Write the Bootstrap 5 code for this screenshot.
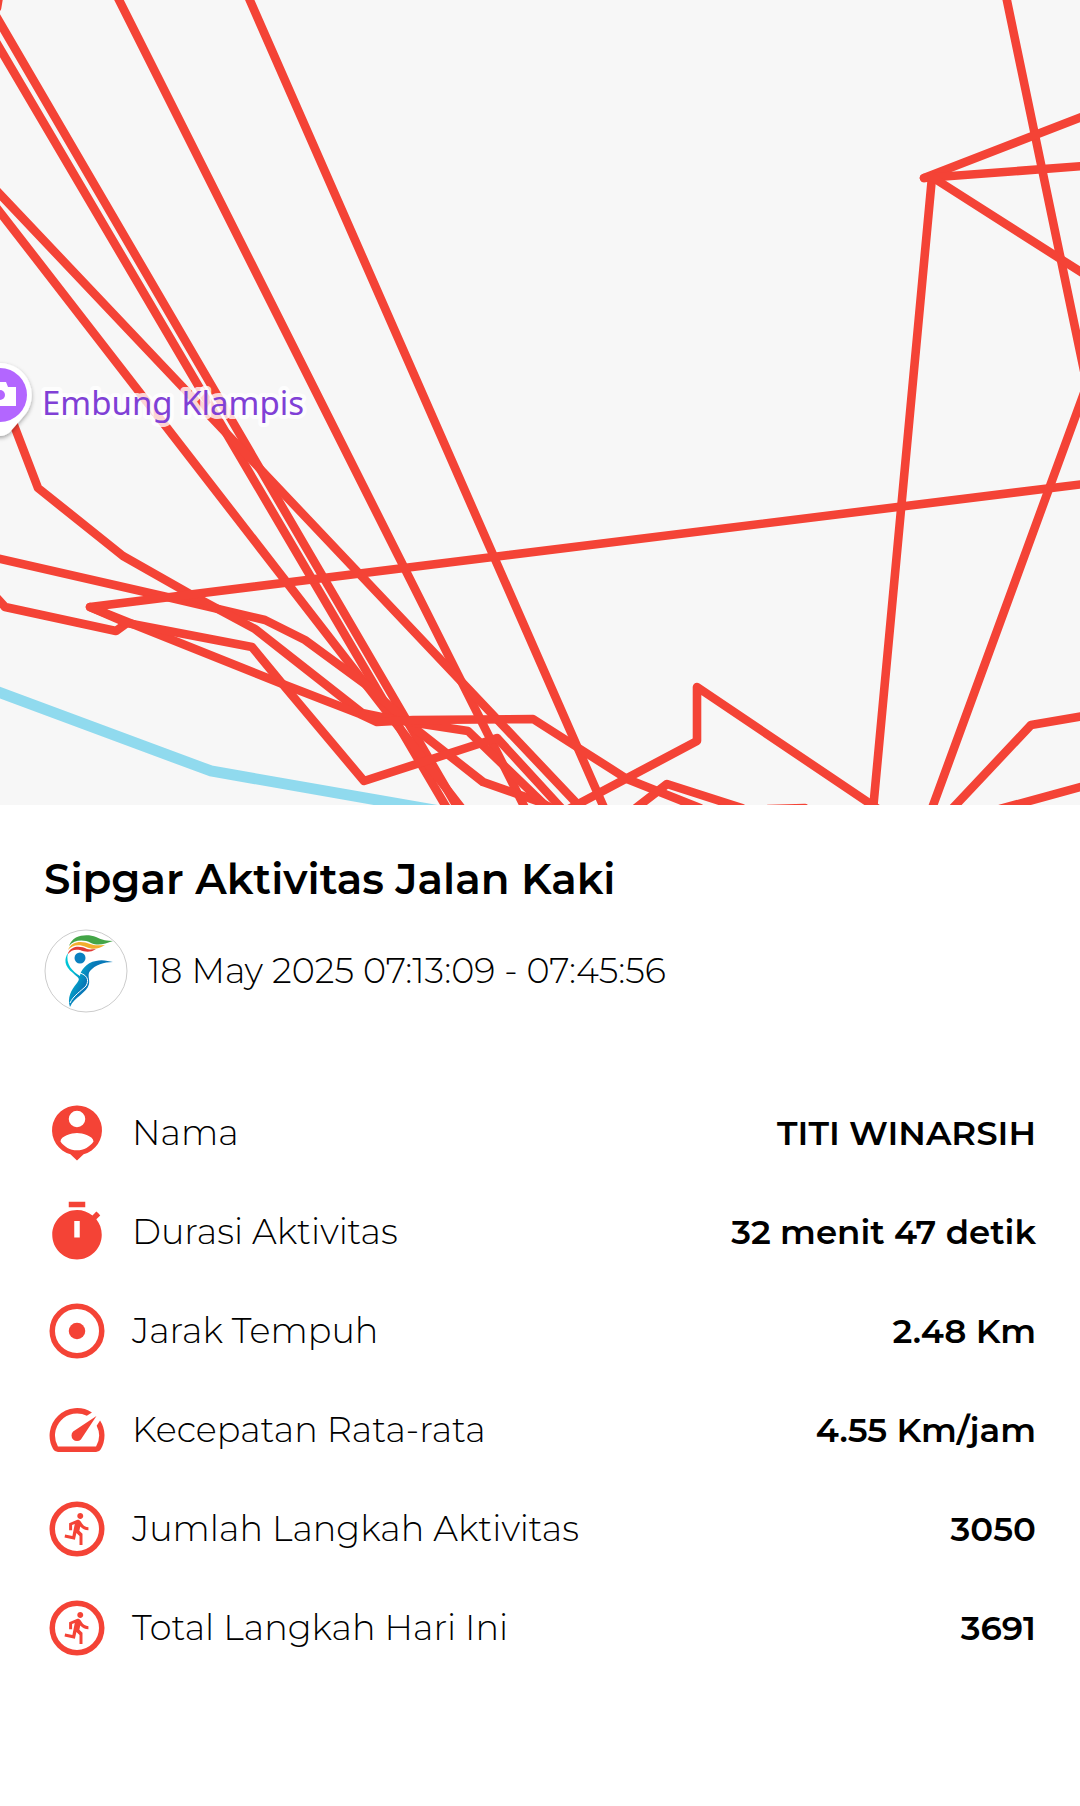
<!DOCTYPE html>
<html lang="id">
<head>
<meta charset="utf-8">
<meta name="viewport" content="width=device-width, initial-scale=1">
<title>Sipgar Aktivitas Jalan Kaki</title>
<link href="https://cdn.jsdelivr.net/npm/bootstrap@5.3.0/dist/css/bootstrap.min.css" rel="stylesheet">
<style>
  body { font-family: Montserrat, Inter, "Liberation Sans", sans-serif; color: #000; }
  .route-map { background: #f7f7f7; }
  .route-map svg { width: 100%; height: auto; }
  .place-name { font: 400 33px "Noto Sans", sans-serif; fill: #8040d6; stroke: #fff; stroke-opacity: .8; stroke-width: 8px; stroke-linejoin: round; paint-order: stroke; }
  .activity { padding: 48px 44px; }
  .activity-title { font-size: 42px; line-height: 52px; font-weight: 600; }
  .activity-time { font-size: 35px; line-height: 40px; font-weight: 300; }
  .activity-when { gap: 20px; }
  .avatar { width: 84px; height: 84px; }
  .stats { margin-top: 87px; gap: 33px; }
  .stat { min-height: 66px; gap: 22px; line-height: 40px; }
  .stat dt { font-size: 35px; font-weight: 300; }
  .stat dd { font-size: 34px; font-weight: 600; }
  .stat-icon { width: 66px; height: 66px; fill: #f44336; }
</style>
<script src="https://cdn.jsdelivr.net/npm/bootstrap@5.3.0/dist/js/bootstrap.bundle.min.js"></script>
</head>
<body class="bg-white">

<svg class="d-none" aria-hidden="true">
  <symbol id="icon-run" viewBox="0 0 24 24">
    <circle cx="12" cy="12" r="9" fill="none" stroke="#f44336" stroke-width="2"/>
    <path transform="translate(5.9 5.4) scale(.54)" d="M13.49 5.48c1.1 0 2-.9 2-2s-.9-2-2-2-2 .9-2 2 .9 2 2 2zm-3.6 13.9l1-4.4 2.1 2v6h2v-7.5l-2.1-2 .6-3c1.3 1.5 3.3 2.5 5.5 2.5v-2c-1.9 0-3.5-1-4.3-2.4l-1-1.6c-.4-.6-1-1-1.7-1-.3 0-.5.1-.8.1l-5.2 2.2v4.7h2v-3.4l1.8-.7-1.6 8.1-4.9-1-.4 2 7 1.4z"/>
  </symbol>
</svg>

<main>
  <section class="route-map" aria-label="Peta rute">
    <svg class="d-block" viewBox="0 0 1080 805" role="img" aria-label="Rute aktivitas di sekitar Embung Klampis">
      <defs>
        <filter id="pin-shadow" x="-30%" y="-30%" width="160%" height="160%"><feDropShadow dx="0" dy="2" stdDeviation="2" flood-opacity=".35"/></filter>
      </defs>
      <!-- river -->
      <path d="M-10 689L211 771L440 811" fill="none" stroke="#90daee" stroke-width="11"/>
      <!-- walking track -->
      <g fill="none" stroke="#f44336" stroke-width="8.6" stroke-linejoin="round" stroke-linecap="round">
        <path d="M248 -4L605 810"/>
        <path d="M117 -4L526 810"/>
        <path d="M-4 16L459 810"/>
        <path d="M-4 42L448 810"/>
        <path d="M-3 8L-1 -4"/>
        <path d="M-4 190L583 810"/>
        <path d="M-4 207L463 810"/>
        <path d="M-4 558L167 597L265 620L305 640L365 684L413 727L483 782L540 802L555 810"/>
        <path d="M12 420L38 488L123 556L190 594L255 629L362 713L396 720L468 731L550 810"/>
        <path d="M1084 484L493 557L90 607L280 683L360 714L377 722L413 720L533 719L580 749L627 779L700 808"/>
        <path d="M-4 597L5 607L116 631L127 623L252 647L280 681L364 781L497 738L563 810"/>
        <path d="M127 623L90 607"/>
        <path d="M567 810L697 741L697 687L878 809"/>
        <path d="M636 808L667 784L742 808"/>
        <path d="M768 809L805 808"/>
        <path d="M1006 -4L1087 385L931 811"/>
        <path d="M873 810L932 177L924 178L1084 116"/>
        <path d="M924 178L1084 166"/>
        <path d="M932 177L1084 274"/>
        <path d="M951 810L1031 725L1084 716"/>
        <path d="M1000 809L1084 786"/>
      </g>
      <!-- place marker -->
      <g>
        <path d="M0 363A32 32 0 0 1 23 417L10 432Q0 440 -10 432L-23 417A32 32 0 0 1 0 363Z" fill="#fff" filter="url(#pin-shadow)"/>
        <circle cx="0" cy="395" r="27" fill="#b366ff"/>
        <path d="M-16 387H-9L-7 382H6L8 387H16V406H-16Z" fill="#fff"/>
        <circle cx="0" cy="395" r="5" fill="#b366ff"/>
        <text class="place-name" x="42" y="415">Embung Klampis</text>
      </g>
    </svg>
  </section>

  <section class="activity">
    <h1 class="activity-title mb-4">Sipgar Aktivitas Jalan Kaki</h1>
    <div class="activity-when d-flex align-items-center">
      <svg class="avatar flex-shrink-0" viewBox="0 0 84 84" role="img" aria-label="Sipgar">
        <defs><linearGradient id="body-fill" gradientUnits="userSpaceOnUse" x1="25" y1="46" x2="41" y2="54"><stop offset="0" stop-color="#00c4d6"/><stop offset="1" stop-color="#0879b8"/></linearGradient></defs>
        <circle cx="42" cy="42" r="41" fill="#fff" stroke="#ccc" stroke-width="1"/>
        <path d="M25 17C29 5 44 5 52 8C58 11 64 12 69 12C61 15 54 17 47 14C39 10 30 11 25 17Z" fill="#43a547"/>
        <path d="M24 21C28 11 39 12 46 15C51 17 56 16 61 16C55 20 49 21 42 18C35 15 28 16 24 21Z" fill="#f2ae2e"/>
        <path d="M24 24C28 16 37 17 43 20C46 21 49 20 52 20C46 24 41 23 36 21C31 20 27 21 24 25Z" fill="#e13a35"/>
        <circle cx="36" cy="29" r="5.5" fill="#0a80bf"/>
        <path d="M24 24C21 35 29 43 36 47C36 43 42 33 52 32C58 30 64 32 69 33C60 33 51 36 46 42C43 46 46 50 45 55C43 64 30 68 26 78C23 69 27 61 33 54C37 49 34 49 29 44C20 37 20 30 24 24Z" fill="url(#body-fill)"/>
        <path d="M36 44C42 46 46 50 42 57C37 62 29 67 26 74" fill="none" stroke="#fff" stroke-width="1"/>
      </svg>
      <time class="activity-time" datetime="2025-05-18T07:13:09">18 May 2025 07:13:09 - 07:45:56</time>
    </div>

    <dl class="stats d-flex flex-column mb-0">
      <div class="stat d-flex align-items-center">
        <svg class="stat-icon flex-shrink-0" viewBox="0 0 24 24" aria-hidden="true"><path fill-rule="evenodd" d="M12 2a9 9 0 0 0-2.4 17.7L12 22l2.4-2.3A9 9 0 0 0 12 2zm0 1.9a3 3 0 1 1 0 6 3 3 0 0 1 0-6zm0 14.4c-2.5 0-4.71-1.28-6-3.2.03-2 4-3.1 6-3.1s5.97 1.1 6 3.1c-1.29 1.92-3.5 3.2-6 3.2z"/></svg>
        <dt>Nama</dt>
        <dd class="mb-0 ms-auto text-end">TITI WINARSIH</dd>
      </div>
      <div class="stat d-flex align-items-center">
        <svg class="stat-icon flex-shrink-0" viewBox="0 0 24 24" aria-hidden="true"><path fill-rule="evenodd" d="M15 1H9v2h6V1zM19.03 7.39l1.42-1.42c-.43-.51-.9-.99-1.41-1.41l-1.42 1.42C16.07 4.74 14.12 4 12 4c-4.97 0-9 4.03-9 9s4.02 9 9 9 9-4.03 9-9c0-2.12-.74-4.07-1.97-5.61zM13 14h-2V8h2v6z"/></svg>
        <dt>Durasi Aktivitas</dt>
        <dd class="mb-0 ms-auto text-end">32 menit 47 detik</dd>
      </div>
      <div class="stat d-flex align-items-center">
        <svg class="stat-icon flex-shrink-0" viewBox="0 0 24 24" aria-hidden="true"><circle cx="12" cy="12" r="9" fill="none" stroke="#f44336" stroke-width="2"/><circle cx="12" cy="12" r="3"/></svg>
        <dt>Jarak Tempuh</dt>
        <dd class="mb-0 ms-auto text-end">2.48 Km</dd>
      </div>
      <div class="stat d-flex align-items-center">
        <svg class="stat-icon flex-shrink-0" viewBox="0 0 24 24" aria-hidden="true"><path d="M20.38 8.57l-1.23 1.85a8 8 0 0 1-.22 7.58H5.07A8 8 0 0 1 15.58 6.85l1.85-1.23A10 10 0 0 0 3.35 19a2 2 0 0 0 1.72 1h13.85a2 2 0 0 0 1.74-1 10 10 0 0 0-.27-10.44zm-9.79 6.84a2 2 0 0 0 2.83 0l5.66-8.49-8.49 5.66a2 2 0 0 0 0 2.83z"/></svg>
        <dt>Kecepatan Rata-rata</dt>
        <dd class="mb-0 ms-auto text-end">4.55 Km/jam</dd>
      </div>
      <div class="stat d-flex align-items-center">
        <svg class="stat-icon flex-shrink-0" aria-hidden="true"><use href="#icon-run"/></svg>
        <dt>Jumlah Langkah Aktivitas</dt>
        <dd class="mb-0 ms-auto text-end">3050</dd>
      </div>
      <div class="stat d-flex align-items-center">
        <svg class="stat-icon flex-shrink-0" aria-hidden="true"><use href="#icon-run"/></svg>
        <dt>Total Langkah Hari Ini</dt>
        <dd class="mb-0 ms-auto text-end">3691</dd>
      </div>
    </dl>
  </section>
</main>
</body>
</html>
